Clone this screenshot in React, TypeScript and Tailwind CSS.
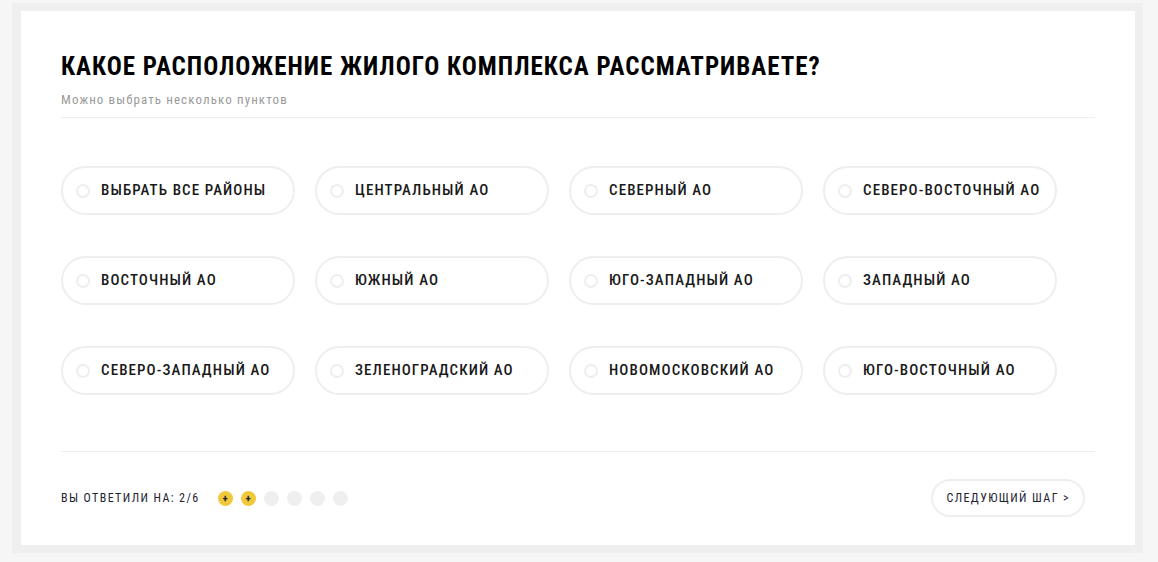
const font = "font-['Roboto',sans-serif] font-stretch-[75%]";

const districts = [
  "Выбрать все районы",
  "Центральный АО",
  "Северный АО",
  "Северо-Восточный АО",
  "Восточный АО",
  "Южный АО",
  "Юго-Западный АО",
  "Западный АО",
  "Северо-Западный АО",
  "Зеленоградский АО",
  "Новомосковский АО",
  "Юго-Восточный АО",
];

function Pill({ label }: { label: string }) {
  return (
    <label className="flex h-[49px] w-[234px] cursor-pointer items-center rounded-full border-2 border-[#eeeeee] pl-[13px]">
      <span className="size-[14px] shrink-0 rounded-full border-2 border-[#eeeeee]" />
      <span className="ml-[11px] text-[15px] font-medium uppercase tracking-[1.1px] whitespace-nowrap text-[#1a1a1a]">
        {label}
      </span>
    </label>
  );
}

export default function App() {
  const answered = 2;
  return (
    <div className={`min-h-screen bg-[#f6f6f6] pl-[12px] pt-[3px] ${font}`}>
      <div className="h-[550px] w-[1131px] border-8 border-l-[9px] border-[#efefef] bg-white">
        <div className="px-[40px] pt-[40px]">
          <h1 className="text-[25px] leading-[31px] font-bold uppercase tracking-[1px] text-black">
            Какое расположение жилого комплекса рассматриваете?
          </h1>
          <p className="mt-[9px] text-[13px] leading-[18px] tracking-[1.1px] text-[#9a9a9a]">
            Можно выбрать несколько пунктов
          </p>
          <div className="mt-[8px] h-px bg-[#eeeeee]" />

          <div className="mt-[48px] grid grid-cols-[repeat(4,234px)] gap-x-[20px] gap-y-[41px]">
            {districts.map((d) => (
              <Pill key={d} label={d} />
            ))}
          </div>

          <div className="mt-[56px] h-px bg-[#eeeeee]" />

          <div className="mt-[27px] flex items-center justify-between pr-[10px]">
            <div className="flex items-center">
              <span className="text-[12px] uppercase tracking-[1.4px] text-[#1e2330]">
                Вы ответили на: 2/6
              </span>
              <div className="ml-[18px] flex gap-[8px]">
                {Array.from({ length: 6 }).map((_, i) => (
                  <span
                    key={i}
                    className={
                      i < answered
                        ? "flex size-[15px] items-center justify-center rounded-full bg-[#f0c93a] text-[11px] leading-none font-bold text-[#1e2330]"
                        : "size-[15px] rounded-full bg-[#efefef]"
                    }
                  >
                    {i < answered ? "+" : null}
                  </span>
                ))}
              </div>
            </div>
            <button className="flex h-[38px] items-center rounded-full border-2 border-[#eeeeee] px-[13px] text-[12px] uppercase tracking-[1.4px] text-[#1e2330]">
              Следующий шаг &gt;
            </button>
          </div>
        </div>
      </div>
    </div>
  );
}
